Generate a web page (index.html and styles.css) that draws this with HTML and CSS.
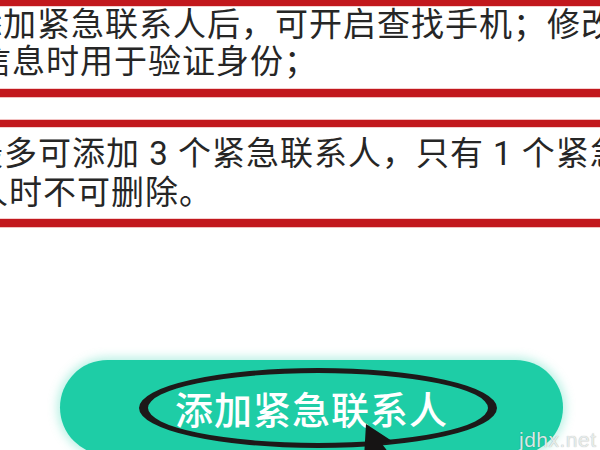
FILE: index.html
```html
<!DOCTYPE html>
<html lang="zh-CN">
<head>
<meta charset="utf-8">
<title>紧急联系人</title>
<link rel="stylesheet" href="styles.css">
</head>
<body>
<main class="page">
  <section class="note note-first">
    <p class="line l1">添加紧急联系人后，可开启查找手机；修改</p>
    <p class="line l2">信息时用于验证身份；</p>
  </section>
  <section class="note note-second">
    <p class="line l3">最多可添加 3 个紧急联系人，只有 1 个紧急</p>
    <p class="line l4">人时不可删除。</p>
  </section>
  <div class="actions">
    <button class="add-btn" type="button">添加紧急联系人</button>
  </div>
</main>
<svg class="marks" width="600" height="450" viewBox="0 0 600 450" aria-hidden="true">
  <path class="ring" fill-rule="evenodd" d="M139 408a179 40 0 1 0 358 0a179 40 0 1 0 -358 0Z M148 408a170 35 0 1 0 340 0a170 35 0 1 0 -340 0Z"/>
  <path class="arrow" d="M366 424 L392 441 L382 444 L396 462 L384 470 L371 451 L364 458 Z"/>
</svg>
<div class="watermark">jdhx.net</div>
</body>
</html>
```
FILE: styles.css
```css
html, body {
  margin: 0;
  padding: 0;
  width: 600px;
  height: 450px;
  overflow: hidden;
  background: #ffffff;
}

body {
  position: relative;
  font-family: "Roboto", "Noto Sans CJK SC", sans-serif;
}

.page {
  display: flex;
  flex-direction: column;
}

.note {
  margin: 0 -40px;
  padding-left: 40px;
  padding-right: 40px;
  border-style: solid;
  border-color: #c2181d;
  border-width: 0;
  box-shadow: 0 0 0 1px rgba(232, 140, 140, 0.55), inset 0 0 0 1px rgba(232, 150, 150, 0.45);
  color: #262626;
}

.note-first {
  border-top-width: 6px;
  border-bottom-width: 8px;
  padding-top: 0;
  padding-bottom: 9px;
  line-height: 37px;
}

.note-second {
  margin-top: 23px;
  border-top-width: 7px;
  border-bottom-width: 8px;
  padding-top: 7px;
  padding-bottom: 7px;
  line-height: 39px;
}

.line {
  margin: 0;
  font-size: 33px;
  letter-spacing: 1px;
  white-space: nowrap;
}

.l1 { margin-left: -31px; }
.l2 { margin-left: -22px; }
.l3 { margin-left: -30px; }
.l4 { margin-left: -25px; }

.actions {
  margin-top: 133px;
  padding-left: 60px;
  display: flex;
}

.add-btn {
  width: 503px;
  height: 95px;
  border: none;
  border-radius: 48px;
  background: #1ecda6;
  box-shadow: 0 0 10px 3px rgba(60, 215, 180, 0.35);
  color: #ffffff;
  font-family: "Noto Sans CJK SC", sans-serif;
  font-size: 38px;
  font-weight: 500;
  letter-spacing: 1px;
  padding: 0;
}

.marks {
  position: absolute;
  left: 0;
  top: 0;
}

.ring {
  fill: #1d1919;
}

.arrow {
  fill: #161414;
}

.watermark {
  position: absolute;
  left: 519px;
  top: 428px;
  font-family: "Liberation Sans", Arial, sans-serif;
  font-size: 21px;
  color: rgba(236, 242, 242, 0.92);
  text-shadow: 0 0 1px rgba(0, 0, 0, 0.35);
  letter-spacing: 0.5px;
}
```
